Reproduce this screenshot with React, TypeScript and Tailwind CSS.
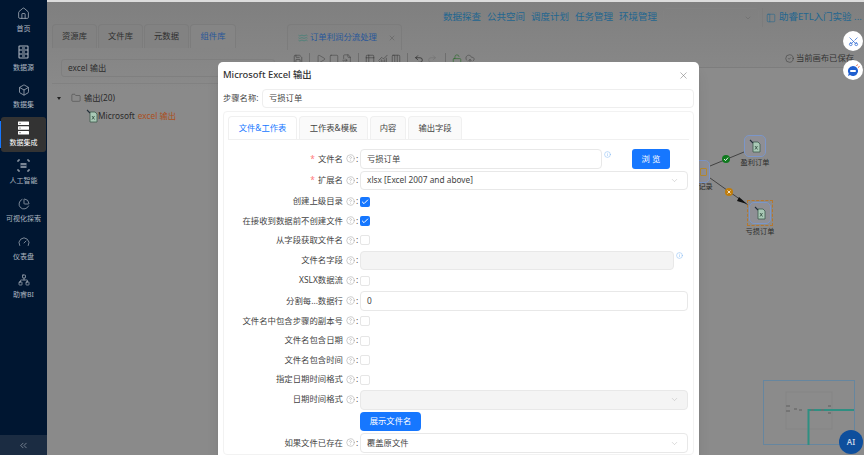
import { useState } from "react";
import {
  House,
  Box,
  ChartPie,
  Gauge,
  Network,
  ChevronsLeft,
  ChevronDown,
  Folder,
  Save,
  Play,
  Square,
  FileInput,
  ChartNoAxesCombined,
  Undo2,
  Redo2,
  LockOpen,
  CloudUpload,
  CircleCheck,
  CircleHelp,
  Scissors,
  X,
  Check,
  PanelLeft,
  Waves,
  Info,
  Table2,
  Columns3,
} from "lucide-react";

function SourceIcon() {
  return (
    <svg width="13" height="14" viewBox="0 0 13 14" fill="none" stroke="currentColor" strokeWidth="1.1">
      <rect x="2" y="1" width="9" height="12" rx="0.6" />
      <path d="M2 5h9M2 9h9M5 3h3M5 7h3M5 11h3" />
    </svg>
  );
}

function IntegrationIcon() {
  return (
    <svg width="13" height="14" viewBox="0 0 13 14" fill="#fff">
      <rect x="1" y="0.5" width="11" height="3.6" rx="0.5" />
      <rect x="1" y="5.2" width="11" height="3.6" rx="0.5" />
      <rect x="1" y="9.9" width="11" height="3.6" rx="0.5" />
      <circle cx="3" cy="2.3" r="0.6" fill="#333" />
      <circle cx="3" cy="7" r="0.6" fill="#333" />
      <circle cx="3" cy="11.7" r="0.6" fill="#333" />
    </svg>
  );
}

function AiIcon() {
  return (
    <svg width="13" height="13" viewBox="0 0 13 13" fill="none" stroke="currentColor" strokeWidth="1">
      <path d="M1 3V1h2M10 1h2v2M1 10v2h2M10 12h2v-2" />
      <rect x="3.5" y="4" width="6" height="5" fill="currentColor" stroke="none" opacity="0.7" />
      <path d="M3.5 6.5h6" stroke="#001631" strokeWidth="0.7" />
    </svg>
  );
}

function ExcelNodeIcon() {
  return (
    <svg width="13" height="14" viewBox="0 0 13 14" fill="none">
      <path d="M4 3h5l2 2v8H4z" fill="#a9c9b6" stroke="#3d5a4c" strokeWidth="0.8" />
      <path d="M6 7l2.5 3.5M8.5 7L6 10.5" stroke="#2f4a3c" strokeWidth="0.8" />
      <path d="M1 1l3 3" stroke="#23303a" strokeWidth="1.1" />
    </svg>
  );
}

const menu = [
  { label: "首页", icon: <House size={13} strokeWidth={1.4} /> },
  { label: "数据源", icon: <SourceIcon /> },
  { label: "数据集", icon: <Box size={12} strokeWidth={1.5} /> },
  { label: "数据集成", icon: <IntegrationIcon />, active: true },
  { label: "人工智能", icon: <AiIcon /> },
  { label: "可视化探索", icon: <ChartPie size={12} strokeWidth={1.4} /> },
  { label: "仪表盘", icon: <Gauge size={12} strokeWidth={1.4} /> },
  { label: "助睿BI", icon: <Network size={12} strokeWidth={1.4} /> },
];

function Sidebar() {
  return (
    <aside className="flex h-full w-[47px] shrink-0 flex-col bg-[#001631] pt-px">
      <nav className="flex flex-1 flex-col">
        {menu.map((m) =>
          m.active ? (
            <div key={m.label} className="relative flex h-[38px] items-center">
              <span className="h-[27px] w-[2px] bg-[#1677ff]" />
              <div className="ml-[-1px] flex h-[35px] w-[45px] flex-col items-center justify-center gap-[3px] rounded-[3px] bg-[#333333] text-white">
                {m.icon}
                <span className="text-[7px] leading-[9px]">{m.label}</span>
              </div>
            </div>
          ) : (
            <div key={m.label} className="flex h-[38px] flex-col items-center justify-center gap-[4px] text-[#aeb6c0]">
              {m.icon}
              <span className="text-[7px] leading-[9px]">{m.label}</span>
            </div>
          )
        )}
      </nav>
      <div className="flex h-[20px] items-center justify-center bg-[#1b2c42] text-[#aeb6c0]">
        <ChevronsLeft size={11} strokeWidth={1.3} />
      </div>
    </aside>
  );
}

function LeftPanel() {
  const tabs = ["资源库", "文件库", "元数据", "组件库"];
  return (
    <section className="w-[240px] shrink-0 pl-[5px] pt-[22px]">
      <div className="flex gap-px">
        {tabs.map((t, i) => (
          <div
            key={t}
            className={`flex h-[24px] w-[45px] items-center justify-center rounded-t-[4px] border border-b-0 border-[#7c7c7c] text-[8.3px] ${
              i === 3 ? "w-[46px] bg-[#858585] text-[#28579a]" : "bg-[#828282] text-[#2e2e2e]"
            }`}
          >
            {t}
          </div>
        ))}
      </div>
      <div className="ml-[9px] mt-[11px] flex h-[18px] w-[214px] items-center rounded-[3px] border border-[#7f7f7f] px-[6px] text-[8.3px] text-[#2e2e2e]">
        excel 输出
      </div>
      <div className="mt-[6px] h-px bg-[#818181]" />
      <div className="mt-[5px] flex h-[18px] items-center pl-[5px] text-[8.3px] text-[#2b2b2b]">
        <span className="h-0 w-0 border-x-[2.5px] border-t-[3px] border-x-transparent border-t-[#222]" />
        <Folder size={10} strokeWidth={1.1} className="ml-[10px] text-[#3a3a3a]" />
        <span className="ml-[3px]">输出(20)</span>
      </div>
      <div className="flex h-[18px] items-center pl-[34px] text-[8.3px] text-[#2b2b2b]">
        <ExcelNodeIcon />
        <span className="ml-[-1px]">Microsoft</span>
        <span className="ml-[3px] text-[#ab4f1d]">excel 输出</span>
      </div>
    </section>
  );
}

function TopNav() {
  const links = ["数据探查", "公共空间", "调度计划", "任务管理", "环境管理"];
  return (
    <header className="h-[22px] whitespace-nowrap pl-[156px] pt-[6px] text-[9.5px] text-[#1f6690]">
      <div className="flex h-[19px] items-center">
        <div className="flex gap-[6px]">
          {links.map((l) => (
            <span key={l}>{l}</span>
          ))}
        </div>
        <div className="ml-[6px] flex h-[19px] w-[96px] shrink-0 items-center justify-end rounded-[3px] border border-[#828282] pr-[6px]">
          <ChevronDown size={8} className="text-[#6c6c6c]" />
        </div>
        <span className="ml-[3px] h-[19px] w-px shrink-0 bg-[#7c7c7c]" />
        <PanelLeft size={10} strokeWidth={1.3} className="ml-[3px] shrink-0" />
        <span className="ml-[3px]">助睿ETL入门实验 ...</span>
      </div>
    </header>
  );
}

function Toolbar() {
  const sep = <span className="mx-[3px] h-[11px] w-px bg-[#6e6e6e]" />;
  return (
    <div className="flex h-[18px] items-center justify-between border-b border-[#7d7d7d] pl-[6px] pr-[10px] text-[#3c3c3c]">
      <div className="flex items-center gap-[3px]">
        <Save size={10} strokeWidth={1.4} />
        {sep}
        <Play size={10} strokeWidth={1.2} />
        <Square size={10} strokeWidth={1.2} />
        <FileInput size={10} strokeWidth={1.2} />
        {sep}
        <Table2 size={10} strokeWidth={1.4} />
        <ChartNoAxesCombined size={10} strokeWidth={1.4} />
        <Columns3 size={10} strokeWidth={1.4} />
        {sep}
        <Undo2 size={10} strokeWidth={1.6} className="text-[#222]" />
        <Redo2 size={10} strokeWidth={1.2} className="mr-[2px] text-[#6c6c6c]" />
        {sep}
        <LockOpen size={10} strokeWidth={1.5} className="text-[#2c6b2c]" />
        <CloudUpload size={10} strokeWidth={1.2} />
      </div>
      <div className="flex items-center gap-[2px] whitespace-nowrap text-[8.3px] text-[#333]">
        <CircleCheck size={9} strokeWidth={1.3} />
        <span>当前画布已保存</span>
      </div>
    </div>
  );
}

function FlowNode({ left, top, label, selected }: { left: string; top: string; label: string; selected?: boolean }) {
  return (
    <div className={`absolute flex w-[40px] flex-col items-center ${left} ${top}`}>
      <div className={selected ? "border border-dashed border-[#b5772e] p-px" : ""}>
        <div className="flex h-[22px] w-[22px] items-center justify-center rounded-[5px] border border-[#7b96c9] bg-[#8f8f95]">
          <ExcelNodeIcon />
        </div>
      </div>
      <span className="mt-px whitespace-nowrap text-[7.2px] leading-[9px] text-[#2b2b2b]">{label}</span>
    </div>
  );
}

function Canvas() {
  return (
    <div className="relative flex-1 bg-[#8b8b8b] bg-[radial-gradient(#747474_0.6px,transparent_0.7px)] bg-[length:12px_12px]">
      {/* edges, in canvas coordinates */}
      <svg className="absolute left-[400px] top-[61px]" width="90" height="90" viewBox="0 0 90 90" fill="none">
        <path d="M23 37L57 23" stroke="#3a3a3a" strokeWidth="0.9" />
        <path d="M23 49L61 76" stroke="#3a3a3a" strokeWidth="0.9" />
        <path d="M52 68l8 7-10-3z" fill="#111" />
        <circle cx="39" cy="30" r="4" fill="#0f7a1e" />
        <path d="M37 30l1.5 1.6 2.6-3" stroke="#fff" strokeWidth="0.9" />
        <circle cx="42" cy="63" r="4" fill="#c07d0c" />
        <path d="M40.5 61.5l3 3M43.5 61.5l-3 3" stroke="#fff" strokeWidth="0.8" />
      </svg>
      <div className="absolute left-[400px] top-[92px] flex h-[23px] w-[23px] items-center justify-end rounded-[5px] border border-[#7b96c9] bg-[#8f8f95] pr-[2px] text-[#b5892e]">
        <span className="h-[8px] w-[7px] rounded-[1px] border border-[#b5892e]" />
      </div>
      <span className="absolute left-[397px] top-[113px] whitespace-nowrap text-[7.2px] leading-[10px] text-[#2b2b2b]">分流记录</span>
      <FlowNode left="left-[448px]" top="top-[67px]" label="盈利订单" />
      <FlowNode left="left-[453px]" top="top-[132px]" label="亏损订单" selected />
      {/* minimap */}
      <svg className="absolute left-[476px] top-[312px]" width="92" height="65" viewBox="0 0 92 65" fill="none">
        <rect x="0.5" y="0.5" width="91" height="64" stroke="#66869f" />
        <rect x="23" y="12" width="46" height="37" stroke="#858585" />
        <path d="M45.5 65V30H91" stroke="#2f8f82" strokeWidth="2" />
        <path d="M23 26h4M23 31h4M31 29h3M36 30h3M48 30h3M58 30h3M65 26h3M65 33h3" stroke="#6d6d6d" strokeWidth="1.4" />
      </svg>
    </div>
  );
}

function Help() {
  return <CircleHelp size={9} strokeWidth={1.1} className="ml-[3px] shrink-0 text-[#8a8a8a]" />;
}

function Field({ label, required, h, children }: { label: string; required?: boolean; h: string; children: React.ReactNode }) {
  return (
    <div className={`flex items-center ${h}`}>
      <label className="flex w-[132px] shrink-0 items-center justify-end whitespace-nowrap text-[8.4px] text-[#444]">
        {required && <span className="mr-[3px] text-[#ff7a7c]">*</span>}
        {label}
        <Help />
        <span className="ml-px w-[4px]">:</span>
      </label>
      {children}
    </div>
  );
}

function Checkbox({ checked }: { checked?: boolean }) {
  const [on, setOn] = useState(!!checked);
  return (
    <button
      onClick={() => setOn(!on)}
      className={`flex h-[10px] w-[10px] items-center justify-center rounded-[2px] ${
        on ? "bg-[#1677ff]" : "border border-[#e6e6e6] bg-white"
      }`}
    >
      {on && <Check size={8} strokeWidth={3} className="text-white" />}
    </button>
  );
}

function Input({ value, width, disabled, select }: { value?: string; width: string; disabled?: boolean; select?: boolean }) {
  return (
    <div
      className={`flex h-[19.5px] items-center justify-between rounded-[4px] border border-[#e8e8e8] pl-[6px] pr-[8px] text-[8.3px] text-[#444] ${width} ${
        disabled ? "bg-[#f4f4f4]" : "bg-white"
      }`}
    >
      <span>{value}</span>
      {select && <ChevronDown size={9} strokeWidth={1.2} className="text-[#b0b0b0]" />}
    </div>
  );
}

function InfoDot() {
  return <Info size={7} strokeWidth={1.6} className="mb-[10px] ml-[2px] shrink-0 text-[#79b4f3]" />;
}

function ExcelModal() {
  const tabs = ["文件&工作表", "工作表&模板", "内容", "输出字段"];
  const tabWidths = ["w-[69px]", "w-[69px]", "w-[36px]", "w-[54px]"];
  return (
    <div className="absolute left-[218px] top-[62px] h-[400px] w-[481px] rounded-t-[5px] bg-white px-[5px] shadow-lg">
      <div className="flex h-[27px] items-center justify-between pr-[5px]">
        <span className="text-[9.4px] font-medium text-[#333]">Microsoft Excel 输出</span>
        <X size={11} strokeWidth={1.2} className="text-[#777]" />
      </div>
      <div className="flex items-center">
        <span className="w-[39px] whitespace-nowrap text-[8.3px] text-[#444]">步骤名称:</span>
        <div className="flex h-[19px] flex-1 items-center rounded-[4px] border border-[#eeeeee] px-[6px] text-[8.3px] text-[#444]">亏损订单</div>
      </div>
      <div className="mt-[3px] rounded-[4px] border border-[#f2f2f2] px-[4px] pt-[4px]">
        <div className="flex gap-[2px] border-b border-[#f0f0f0]">
          {tabs.map((t, i) => (
            <div
              key={t}
              className={`flex h-[23px] items-center justify-center rounded-t-[4px] border border-b-0 border-[#f0f0f0] text-[8.3px] ${tabWidths[i]} ${
                i === 0 ? "bg-white text-[#1677ff]" : "bg-[#fafafa] text-[#444]"
              }`}
            >
              {t}
            </div>
          ))}
        </div>
        <div className="pt-[8.5px]">
          <Field label="文件名" required h="h-[21px]">
            <Input value="亏损订单" width="w-[242px]" />
            <InfoDot />
            <button className="ml-[21px] h-[20px] w-[38px] rounded-[3px] bg-[#1677ff] text-[8.3px] text-white">浏 览</button>
          </Field>
          <Field label="扩展名" required h="h-[22px]">
            <Input value="xlsx [Excel 2007 and above]" width="w-[328px]" select />
          </Field>
          <Field label="创建上级目录" h="h-[20px]">
            <Checkbox checked />
          </Field>
          <Field label="在接收到数据前不创建文件" h="h-[19px]">
            <Checkbox checked />
          </Field>
          <Field label="从字段获取文件名" h="h-[19.5px]">
            <Checkbox />
          </Field>
          <Field label="文件名字段" h="h-[20.5px]">
            <Input width="w-[314px]" disabled />
            <InfoDot />
          </Field>
          <Field label="XSLX数据流" h="h-[20.5px]">
            <Checkbox />
          </Field>
          <Field label="分割每...数据行" h="h-[20px]">
            <Input value="0" width="w-[328px]" />
          </Field>
          <Field label="文件名中包含步骤的副本号" h="h-[20px]">
            <Checkbox />
          </Field>
          <Field label="文件名包含日期" h="h-[19.5px]">
            <Checkbox />
          </Field>
          <Field label="文件名包含时间" h="h-[19.5px]">
            <Checkbox />
          </Field>
          <Field label="指定日期时间格式" h="h-[19.5px]">
            <Checkbox />
          </Field>
          <Field label="日期时间格式" h="h-[20.5px]">
            <Input width="w-[328px]" disabled select />
          </Field>
          <div className="flex h-[22px] items-center pl-[132px]">
            <button className="h-[19px] w-[61px] rounded-[4px] bg-[#1677ff] text-[8.3px] text-white">展示文件名</button>
          </div>
          <Field label="如果文件已存在" h="h-[22px]">
            <Input value="覆盖原文件" width="w-[328px]" select />
          </Field>
        </div>
      </div>
    </div>
  );
}

export default function App() {
  return (
    <div className="relative flex h-[455px] w-[864px] overflow-hidden bg-[linear-gradient(#7f7f7f,#8a8a8a_90px)] [font-family:'Noto_Sans','Noto_Sans_CJK_SC',sans-serif]">
      <Sidebar />
      <main className="flex min-w-0 flex-1 flex-col">
        <div className="h-[2px] bg-[#dcdcdc]" />
        <div className="flex min-h-0 flex-1">
          <LeftPanel />
          <section className="flex min-w-0 flex-1 flex-col">
            <TopNav />
            <div className="flex h-[26px] w-[115px] items-center rounded-t-[4px] border border-b-0 border-[#7c7c7c] pl-[10px] text-[8.4px] text-[#28579a]">
              <Waves size={10} strokeWidth={1.4} className="mr-[2px] text-[#2f7f74]" />
              订单利润分流处理
              <X size={8} strokeWidth={1.3} className="ml-[11px] text-[#555]" />
            </div>
            <Toolbar />
            <Canvas />
          </section>
        </div>
      </main>

      <ExcelModal />

      {/* floating shortcuts */}
      <div className="absolute left-[843px] top-[31px] flex h-[20px] w-[20px] items-center justify-center rounded-full bg-white text-[#1f5fd0]">
        <Scissors size={11} strokeWidth={1.5} className="-rotate-90" />
      </div>
      <div className="absolute left-[843px] top-[60px] flex h-[20px] w-[20px] items-center justify-center rounded-full bg-white">
        <svg width="15" height="15" viewBox="0 0 15 15">
          <path d="M7 3a5 5 0 1 1-3 9l-2 1 .7-2.4A5 5 0 0 1 7 3z" fill="#1f5fd0" />
          <rect x="4" y="7" width="6" height="2" rx="1" fill="#fff" />
          <path d="M10.5 3l1-1.5M12 4.5l1.5-1" stroke="#e8643c" strokeWidth="1" />
        </svg>
      </div>
      <div className="absolute left-[839px] top-[430px] flex h-[24px] w-[24px] items-center justify-center rounded-full bg-[#0e4f9d] text-[8px] font-semibold text-[#c9d6e6]">AI</div>
    </div>
  );
}
